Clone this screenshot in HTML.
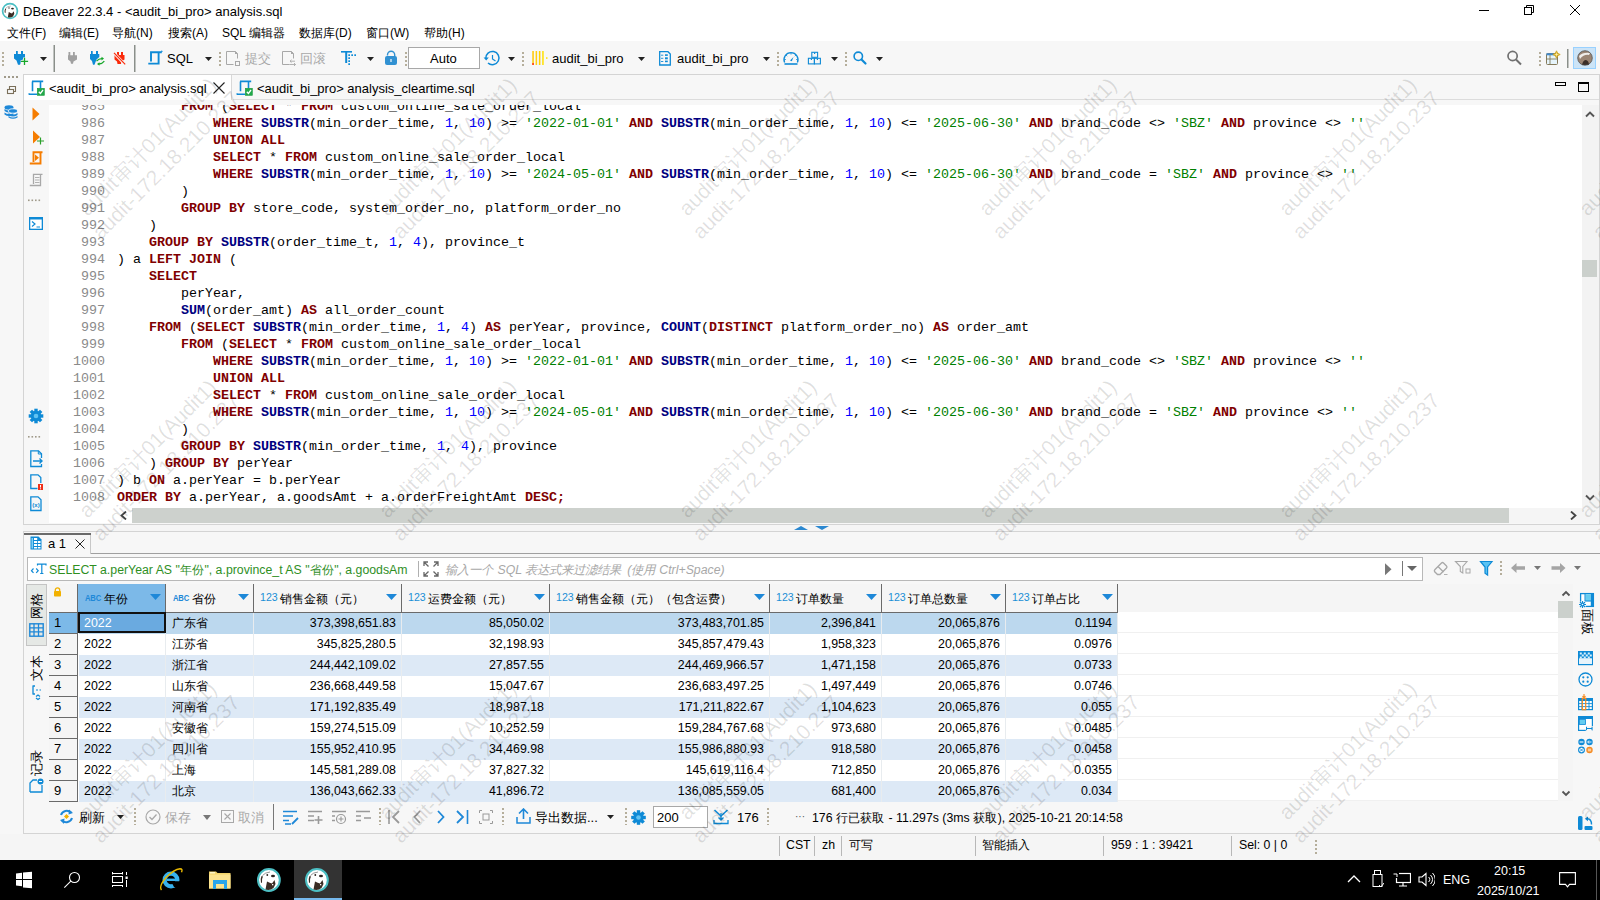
<!DOCTYPE html><html><head><meta charset="utf-8"><style>
*{margin:0;padding:0;box-sizing:border-box}
html,body{width:1600px;height:900px;overflow:hidden;background:#f7f7f7;font-family:"Liberation Sans",sans-serif}
.t{position:absolute;white-space:pre;line-height:16px}
.cj{display:inline-block;overflow:visible;white-space:pre;vertical-align:top}
.code{position:absolute;font-family:"Liberation Mono",monospace;font-size:13.33px;line-height:17px;white-space:pre;color:#000}
.k{color:#800000;font-weight:bold}
.f{color:#000080;font-weight:bold}
.n{color:#0000ff}
.s{color:#008000}
.ln{position:absolute;font-family:"Liberation Mono",monospace;font-size:13.33px;line-height:17px;white-space:pre;color:#8a8a8a;text-align:right;width:56px}
.wm{position:absolute;width:300px;height:52px;text-align:center;transform:rotate(-45deg);color:rgba(0,0,0,0.12);font-size:21px;line-height:26px;white-space:pre}
</style></head><body><div style="position:absolute;left:0px;top:0px;width:1600px;height:22px;background:#fff"></div>
<div style="position:absolute;left:0px;top:22px;width:1600px;height:19px;background:#fff"></div>
<svg style="position:absolute;left:1px;top:2px;" width="18" height="18" viewBox="0 0 18 18"><circle cx="9" cy="9" r="7.4" fill="#fff" stroke="#4cbfc4" stroke-width="1.7"/><circle cx="8" cy="6" r="0.7" fill="#2a2420"/><ellipse cx="11.5" cy="6.6" rx="1.4" ry="0.9" fill="#2a2420"/><path d="M4.2 6.5 Q3.2 8.5 3.9 11 L4.6 10.7 Q4.3 8.5 5.2 6.8 Z" fill="#3a2c24"/><path d="M5 6 Q6.5 4.3 9.8 4" stroke="#777" stroke-width="0.5" fill="none"/><path d="M6.8 15.3 L7.8 10 Q9.8 11.2 11 11.5 L12.7 9.2 L13.3 11.8 L12 14.5 Q9.8 16.2 6.8 15.3 Z" fill="#3a2c24"/></svg>
<div class="t" style="left:23px;top:4px;font-size:13px;color:#000;">DBeaver 22.3.4 - &lt;audit_bi_pro&gt; analysis.sql</div>
<div style="position:absolute;left:1479px;top:10px;width:10px;height:1px;background:#000"></div>
<svg style="position:absolute;left:1523px;top:4px;" width="12" height="12" viewBox="0 0 12 12"><rect x="1.5" y="3.5" width="7" height="7" fill="none" stroke="#000"/><path d="M3.5 3.5 V1.5 H10.5 V8.5 H8.5" fill="none" stroke="#000"/></svg>
<svg style="position:absolute;left:1569px;top:4px;" width="12" height="12" viewBox="0 0 12 12"><path d="M1 1 L11 11 M11 1 L1 11" stroke="#000" stroke-width="1"/></svg>
<div class="t" style="left:7px;top:25px;font-size:12px;color:#000;"><span class="cj" style="width:2em">文件</span>(F)</div>
<div class="t" style="left:59px;top:25px;font-size:12px;color:#000;"><span class="cj" style="width:2em">编辑</span>(E)</div>
<div class="t" style="left:112px;top:25px;font-size:12px;color:#000;"><span class="cj" style="width:2em">导航</span>(N)</div>
<div class="t" style="left:168px;top:25px;font-size:12px;color:#000;"><span class="cj" style="width:2em">搜索</span>(A)</div>
<div class="t" style="left:222px;top:25px;font-size:12px;color:#000;">SQL <span class="cj" style="width:3em">编辑器</span></div>
<div class="t" style="left:299px;top:25px;font-size:12px;color:#000;"><span class="cj" style="width:3em">数据库</span>(D)</div>
<div class="t" style="left:366px;top:25px;font-size:12px;color:#000;"><span class="cj" style="width:2em">窗口</span>(W)</div>
<div class="t" style="left:424px;top:25px;font-size:12px;color:#000;"><span class="cj" style="width:2em">帮助</span>(H)</div>
<div style="position:absolute;left:0px;top:41px;width:1600px;height:33px;background:#f7f7f7"></div>
<svg style="position:absolute;left:0;top:0" width="1600" height="74" viewBox="0 0 1600 74"><rect x="2" y="52" width="2" height="2" fill="#b5ae9b"/><rect x="2" y="56" width="2" height="2" fill="#b5ae9b"/><rect x="2" y="60" width="2" height="2" fill="#b5ae9b"/><rect x="2" y="64" width="2" height="2" fill="#b5ae9b"/><rect x="219" y="52" width="2" height="2" fill="#b5ae9b"/><rect x="219" y="56" width="2" height="2" fill="#b5ae9b"/><rect x="219" y="60" width="2" height="2" fill="#b5ae9b"/><rect x="219" y="64" width="2" height="2" fill="#b5ae9b"/><rect x="405" y="52" width="2" height="2" fill="#b5ae9b"/><rect x="405" y="56" width="2" height="2" fill="#b5ae9b"/><rect x="405" y="60" width="2" height="2" fill="#b5ae9b"/><rect x="405" y="64" width="2" height="2" fill="#b5ae9b"/><rect x="522" y="52" width="2" height="2" fill="#b5ae9b"/><rect x="522" y="56" width="2" height="2" fill="#b5ae9b"/><rect x="522" y="60" width="2" height="2" fill="#b5ae9b"/><rect x="522" y="64" width="2" height="2" fill="#b5ae9b"/><rect x="777" y="52" width="2" height="2" fill="#b5ae9b"/><rect x="777" y="56" width="2" height="2" fill="#b5ae9b"/><rect x="777" y="60" width="2" height="2" fill="#b5ae9b"/><rect x="777" y="64" width="2" height="2" fill="#b5ae9b"/><rect x="845" y="52" width="2" height="2" fill="#b5ae9b"/><rect x="845" y="56" width="2" height="2" fill="#b5ae9b"/><rect x="845" y="60" width="2" height="2" fill="#b5ae9b"/><rect x="845" y="64" width="2" height="2" fill="#b5ae9b"/><rect x="1539" y="52" width="2" height="2" fill="#b5ae9b"/><rect x="1539" y="56" width="2" height="2" fill="#b5ae9b"/><rect x="1539" y="60" width="2" height="2" fill="#b5ae9b"/><rect x="1539" y="64" width="2" height="2" fill="#b5ae9b"/><path d="M16 51 H17.8 V54 H21 V51 H23 V54 H25 V57.5 L21.5 60.5 L20 64.7 H18 L16.5 60.5 L14 58.5 V54 H16 Z" fill="#0e8ad6"/><path d="M24.5 57.6 V65.2 M20.7 61.4 H28.3" stroke="#f7f7f7" stroke-width="3"/><path d="M24.5 57.8 V65 M20.9 61.4 H28.1" stroke="#17a82b" stroke-width="1.3"/><path d="M40 57 H47 L43.5 61 Z" fill="#222"/><path d="M205 57 H212 L208.5 61 Z" fill="#222"/><path d="M367 57 H374 L370.5 61 Z" fill="#222"/><path d="M508 57 H515 L511.5 61 Z" fill="#222"/><path d="M638 57 H645 L641.5 61 Z" fill="#222"/><path d="M763 57 H770 L766.5 61 Z" fill="#222"/><path d="M831 57 H838 L834.5 61 Z" fill="#222"/><path d="M876 57 H883 L879.5 61 Z" fill="#222"/><rect x="53.5" y="45" width="1.5" height="27" fill="#8a8f8a"/><rect x="134" y="45" width="1.5" height="27" fill="#8a8f8a"/><path d="M68.5 52 H70.3 V55.3 H73 V52 H74.8 V55.3 H77 V59.5 L73.5 61.5 L73 63.7 H71 L70.5 61.5 L68 59.5 V55.3 H68.5 Z" fill="#a0a0a0"/><path d="M91 51 H92.7 V54 H96 V51 H98 V54 H99.3 V57 L96.5 59.5 L94.5 64.7 H93 L92 61 L90 59 V54 H91 Z" fill="#0e8ad6"/><path d="M96.5 61.2 Q99 58.3 102.5 58.6" stroke="#17a82b" stroke-width="1.3" fill="none"/><path d="M101.5 56.8 L104 58.6 L101.5 60.4 Z" fill="#17a82b"/><path d="M104.3 61.2 Q102 64.2 98.5 64" stroke="#17a82b" stroke-width="1.3" fill="none"/><path d="M99.5 62.2 L97 64 L99.5 65.8 Z" fill="#17a82b"/><path d="M117 52 H119 V55 H121 V52 H123 V55 H124.5 V59.5 L121.5 61.5 L121 64 H117.5 L117 61.5 L114.5 59.5 V55 H117 Z" fill="#fa2a0a"/><path d="M113.5 52.5 L125 64.5" stroke="#f7f7f7" stroke-width="2.6"/><path d="M114 52.8 L125.2 64.3" stroke="#fa2a0a" stroke-width="1.2"/><path d="M151 61.5 V52.3 H161.8 M158.6 52.8 V63.6 H148.3" stroke="#0e8ad6" stroke-width="1.9" fill="none"/><path d="M161 51 L162.5 51.5" stroke="#0e8ad6" stroke-width="1.2"/><path d="M233.5 64.5 H226.5 V51.5 H235.5 L237.5 53.5 V58.5" stroke="#a8a8a8" stroke-width="1" fill="none"/><path d="M235 51 L238 54 H235 Z" fill="#a8a8a8"/><rect x="235.5" y="61.5" width="4" height="4" fill="none" stroke="#a8a8a8" stroke-width="1"/><path d="M289.5 64.5 H282.5 V51.5 H291.5 L293.5 53.5 V58.5" stroke="#a8a8a8" stroke-width="1" fill="none"/><path d="M291 51 L294 54 H291 Z" fill="#a8a8a8"/><path d="M290 61.2 H295 M291.5 59.8 L290 61.2 L291.5 62.6 M289.5 64.5 H295.5 M294 63 L295.5 64.5 L294 66" stroke="#a8a8a8" stroke-width="0.9" fill="none"/><rect x="341" y="51" width="11" height="1.6" fill="#0e8ad6"/><rect x="345.2" y="52" width="2" height="11" fill="#0e8ad6"/><rect x="348.3" y="54.3" width="1.7" height="1.7" fill="#0e8ad6"/><rect x="351.3" y="54.3" width="1.7" height="1.7" fill="#0e8ad6"/><rect x="354.3" y="54.3" width="1.7" height="1.7" fill="#0e8ad6"/><rect x="348.3" y="57.3" width="1.7" height="1.7" fill="#0e8ad6"/><rect x="348.3" y="60.3" width="1.7" height="1.7" fill="#0e8ad6"/><rect x="348.3" y="63.3" width="1.7" height="1.7" fill="#0e8ad6"/><path d="M387.5 55.5 V54.8 A3.6 3.6 0 0 1 394.7 54.8 V56.5" stroke="#3191d2" stroke-width="1.4" fill="none"/><rect x="385" y="56" width="12" height="9" rx="2" fill="#3191d2"/><rect x="390.3" y="59" width="1.4" height="3" fill="#d8ecf8"/><path d="M485.8 58.5 A6.6 6.6 0 1 1 488 63" stroke="#0e8ad6" stroke-width="1.5" fill="none"/><path d="M483.6 57.5 H488.8 L486.2 60.6 Z" fill="#0e8ad6"/><path d="M492.5 55 V59 L495.5 61" stroke="#0e8ad6" stroke-width="1.2" fill="none"/><rect x="532.3" y="51" width="1.5" height="14" fill="#ffc800"/><rect x="535.6" y="51" width="1.5" height="14" fill="#ffcf10"/><rect x="538.9" y="51" width="1.5" height="14" fill="#ffd000"/><rect x="542.2" y="51" width="1.5" height="14" fill="#ffe000"/><rect x="532.3" y="63" width="1.5" height="2" fill="#ff3020"/><rect x="546" y="57.3" width="1.5" height="1.5" fill="#ffe000"/><path d="M659.7 51.7 H668 L670.3 54 V65 H659.7 Z" stroke="#0e8ad6" stroke-width="1.3" fill="none"/><path d="M661 55.2 H663.3 M661 58.3 H663.3 M661 61.5 H663.3" stroke="#0e8ad6" stroke-width="0.9"/><rect x="665" y="54.3" width="2.8" height="1.6" fill="#0e8ad6"/><rect x="665" y="57.3" width="2.8" height="2" fill="#0e8ad6"/><rect x="665" y="60.6" width="2.8" height="1.6" fill="#0e8ad6"/><path d="M784.6 62.5 A7 7 0 1 1 797.4 62.5" stroke="#0e8ad6" stroke-width="1.3" fill="none"/><path d="M784.5 64 H797.5" stroke="#0e8ad6" stroke-width="1.6"/><path d="M791 53 V54.5 M786.2 55.2 L787.2 56.2 M795.8 55.2 L794.8 56.2 M784.3 59.5 H785.8 M797.7 59.5 H796.2" stroke="#0e8ad6" stroke-width="0.9"/><path d="M790 60.5 L793.5 57 L791.8 61.2 Z" fill="#0e8ad6"/><rect x="811.8" y="52.3" width="5.8" height="5" fill="none" stroke="#0e8ad6" stroke-width="1.1"/><rect x="808.4" y="58.3" width="6" height="5.6" fill="none" stroke="#0e8ad6" stroke-width="1.1"/><rect x="814.4" y="58.3" width="6" height="5.6" fill="none" stroke="#0e8ad6" stroke-width="1.1"/><rect x="814" y="52.5" width="1.2" height="1.5" fill="#0e8ad6"/><rect x="810.8" y="58.5" width="1.2" height="1.5" fill="#0e8ad6"/><rect x="816.8" y="58.5" width="1.2" height="1.5" fill="#0e8ad6"/><circle cx="858.3" cy="56.3" r="4.2" stroke="#0e8ad6" stroke-width="1.6" fill="none"/><path d="M861.5 59.5 L865.5 63.5" stroke="#0e8ad6" stroke-width="2.2" stroke-linecap="round"/><circle cx="1512.6" cy="56" r="4.6" stroke="#707070" stroke-width="1.7" fill="none"/><path d="M1516 59.5 L1521 64.5" stroke="#707070" stroke-width="2"/><rect x="1546.5" y="53.5" width="11" height="11" rx="1" fill="#e6f4fb" stroke="#857a5a" stroke-width="1"/><rect x="1546.5" y="53.3" width="8" height="2" fill="#3f8ad0"/><path d="M1550 55 V64.5 M1546.5 59 H1557.5" stroke="#857a5a" stroke-width="0.9"/><path d="M1556.5 50.8 L1558.2 54.5 L1556.5 58.2 L1554.8 54.5 Z M1552.8 54.5 L1556.5 52.8 L1560.2 54.5 L1556.5 56.2 Z" fill="#fff2a8" stroke="#c89a10" stroke-width="0.8"/><rect x="1567" y="49" width="1.5" height="19" fill="#8a8f8a"/></svg>
<div class="t" style="left:167px;top:51px;font-size:13px;color:#000;">SQL</div>
<div class="t" style="left:245px;top:51px;font-size:13px;color:#a8a8a8;"><span class="cj" style="width:2em">提交</span></div>
<div class="t" style="left:300px;top:51px;font-size:13px;color:#a8a8a8;"><span class="cj" style="width:2em">回滚</span></div>
<div style="position:absolute;left:408px;top:47px;width:72px;height:22px;background:#fff;border:1px solid #a8a8a8"></div>
<div class="t" style="left:430px;top:51px;font-size:13px;color:#000;">Auto</div>
<div class="t" style="left:552px;top:51px;font-size:13px;color:#000;">audit_bi_pro</div>
<div class="t" style="left:677px;top:51px;font-size:13px;color:#000;">audit_bi_pro</div>
<div style="position:absolute;left:1573px;top:47px;width:23px;height:22px;background:#cce4f7;border:1px solid #99d1ff"></div>
<svg style="position:absolute;left:1577px;top:50px;" width="16" height="16" viewBox="0 0 16 16"><circle cx="8" cy="8" r="7.3" fill="#9b8574"/><path d="M2 6 Q6 2 13 3 L12 5 Q7 4 3 9 Z" fill="#fff" opacity="0.85"/><path d="M5 15 Q6 10 9 10 Q12 11 12 15 Z" fill="#3a2e28"/><circle cx="8" cy="8" r="7.3" fill="none" stroke="#555" stroke-width="0.8"/></svg>
<div style="position:absolute;left:0px;top:74px;width:23px;height:786px;background:#f7f7f7"></div>
<div style="position:absolute;left:4px;top:76px;width:14px;height:2px;background:repeating-linear-gradient(90deg,#a09a8a 0 2px,transparent 2px 4px)"></div>
<svg style="position:absolute;left:6px;top:85px;" width="11" height="11" viewBox="0 0 11 11"><rect x="1.5" y="4.5" width="6" height="4" fill="none" stroke="#7a6f5a" stroke-width="1.1"/><path d="M3.5 4.5 V1.5 H9.5 V6.5 H7.5" fill="none" stroke="#7a6f5a" stroke-width="1.1"/></svg>
<svg style="position:absolute;left:4px;top:105px;" width="14" height="14" viewBox="0 0 14 14"><ellipse cx="5" cy="2.5" rx="4.5" ry="2.2" fill="#1e88d8"/><path d="M0.5 4 Q5 7 9.5 4 V6 Q5 9 0.5 6 Z M0.5 7.5 Q5 10.5 9.5 7.5 V9.5 Q5 12.5 0.5 9.5 Z" fill="#1e88d8"/><ellipse cx="9" cy="6" rx="4.5" ry="2.2" fill="#1e88d8" stroke="#fff" stroke-width="0.8"/><path d="M4.5 8 Q9 11 13.5 8 V10 Q9 13 4.5 10 Z M4.5 11 Q9 14 13.5 11 V12.5 Q9 15 4.5 12.5 Z" fill="#1e88d8"/></svg>
<div style="position:absolute;left:23px;top:74px;width:1577px;height:451px;background:#f7f7f7;border:1px solid #d4d4d4"></div>
<div style="position:absolute;left:24px;top:75px;width:208px;height:25px;background:#fff;border-right:1px solid #d8d8d8"></div>
<div style="position:absolute;left:233px;top:99px;width:1366px;height:1px;background:#dcdcdc"></div>
<svg style="position:absolute;left:28px;top:79px;" width="18" height="18" viewBox="0 0 18 18"><path d="M4 2.4 H15.2 M4.5 2.4 V12.2 M12.5 2.8 V9.5 M1 15.2 H9" stroke="#0e8ad6" stroke-width="1.6" fill="none"/><path d="M1 14.2 V15.8" stroke="#0e8ad6" stroke-width="1"/><rect x="9.3" y="9.3" width="7" height="7" fill="#22a84a" stroke="#179a3c" stroke-width="0.6"/><path d="M10.8 12.8 L12.4 14.5 L15 11" stroke="#fff" stroke-width="1.3" fill="none"/></svg>
<div class="t" style="left:49px;top:81px;font-size:13px;color:#000;">&lt;audit_bi_pro&gt; analysis.sql</div>
<svg style="position:absolute;left:213px;top:82px;" width="12" height="12" viewBox="0 0 12 12"><path d="M0.5 0.5 L11.5 11.5 M11.5 0.5 L0.5 11.5" stroke="#222" stroke-width="1.1"/></svg>
<svg style="position:absolute;left:236px;top:79px;" width="18" height="18" viewBox="0 0 18 18"><path d="M4 2.4 H15.2 M4.5 2.4 V12.2 M12.5 2.8 V9.5 M1 15.2 H9" stroke="#0e8ad6" stroke-width="1.6" fill="none"/><path d="M1 14.2 V15.8" stroke="#0e8ad6" stroke-width="1"/><rect x="9.3" y="9.3" width="7" height="7" fill="#22a84a" stroke="#179a3c" stroke-width="0.6"/><path d="M10.8 12.8 L12.4 14.5 L15 11" stroke="#fff" stroke-width="1.3" fill="none"/></svg>
<div class="t" style="left:257px;top:81px;font-size:13px;color:#000;">&lt;audit_bi_pro&gt; analysis_cleartime.sql</div>
<div style="position:absolute;left:1555px;top:82px;width:11px;height:4px;border:1px solid #000"></div>
<div style="position:absolute;left:1578px;top:82px;width:11px;height:10px;border:1px solid #000;border-top-width:2px"></div>
<svg style="position:absolute;left:0;top:0" width="60" height="520" viewBox="0 0 60 520"><path d="M32.5 107.5 L39.5 114 L32.5 120.5 Z" fill="#f57c00"/><path d="M33 130.5 L40 137 L33 143.5 Z" fill="#f57c00"/><path d="M40.5 137.5 V144.5 M37 141 H44" stroke="#2aa02a" stroke-width="1.2"/><path d="M33.5 162 V152.3 H42.5 M40.5 152.8 V163.5 H29.8" stroke="#f57c00" stroke-width="1.9" fill="none"/><path d="M35 154.5 L39 157.8 L35 161 Z" fill="#f57c00"/><path d="M33.5 184 V174.3 H42.5 M40.5 174.8 V185.5 H29.8" stroke="#a8a8a8" stroke-width="1.3" fill="none"/><path d="M35 177.5 H39.5 M35 180 H39.5 M35 182.5 H39.5" stroke="#a8a8a8" stroke-width="0.9"/><rect x="28" y="199.5" width="1.6" height="1.6" fill="#a09a8a"/><rect x="28" y="436" width="1.6" height="1.6" fill="#a09a8a"/><rect x="31.5" y="199.5" width="1.6" height="1.6" fill="#a09a8a"/><rect x="31.5" y="436" width="1.6" height="1.6" fill="#a09a8a"/><rect x="35" y="199.5" width="1.6" height="1.6" fill="#a09a8a"/><rect x="35" y="436" width="1.6" height="1.6" fill="#a09a8a"/><rect x="38.5" y="199.5" width="1.6" height="1.6" fill="#a09a8a"/><rect x="38.5" y="436" width="1.6" height="1.6" fill="#a09a8a"/><rect x="29" y="217" width="14" height="13" fill="#0e8ad6"/><rect x="30.3" y="219.5" width="11.4" height="9.2" fill="#fff"/><path d="M32 221.5 L35 224 L32 226.5 M36.5 227 H40" stroke="#0e8ad6" stroke-width="1.2" fill="none"/><rect x="34.3" y="408.7" width="3.4" height="3.5" fill="#0e8ad6" transform="rotate(0 36 416)"/><rect x="34.3" y="408.7" width="3.4" height="3.5" fill="#0e8ad6" transform="rotate(45 36 416)"/><rect x="34.3" y="408.7" width="3.4" height="3.5" fill="#0e8ad6" transform="rotate(90 36 416)"/><rect x="34.3" y="408.7" width="3.4" height="3.5" fill="#0e8ad6" transform="rotate(135 36 416)"/><rect x="34.3" y="408.7" width="3.4" height="3.5" fill="#0e8ad6" transform="rotate(180 36 416)"/><rect x="34.3" y="408.7" width="3.4" height="3.5" fill="#0e8ad6" transform="rotate(225 36 416)"/><rect x="34.3" y="408.7" width="3.4" height="3.5" fill="#0e8ad6" transform="rotate(270 36 416)"/><rect x="34.3" y="408.7" width="3.4" height="3.5" fill="#0e8ad6" transform="rotate(315 36 416)"/><circle cx="36" cy="416" r="5.2" fill="#0e8ad6"/><circle cx="36" cy="416" r="2.3" fill="#62c3f2"/><path d="M41.5 464 V466.5 H30.8 V450.8 H38.5 L41.5 453.8 V458" stroke="#0e8ad6" stroke-width="1.3" fill="none"/><path d="M38.3 450.8 V454 H41.5" stroke="#0e8ad6" stroke-width="1" fill="none"/><path d="M33 461 H42 M39.5 458.5 L42 461 L39.5 463.5" stroke="#0e8ad6" stroke-width="1.4" fill="none"/><path d="M37.5 488.5 H30.8 V474.8 H38 L40.8 477.6 V483" stroke="#0e8ad6" stroke-width="1.3" fill="none"/><rect x="38" y="484" width="5" height="6" fill="#f0301a"/><path d="M40.5 485 V487.5 M40.5 488.3 V489.3" stroke="#fff" stroke-width="1"/><path d="M30.8 510.5 V496.8 H38 L41 499.8 V510.5 Z" stroke="#0e8ad6" stroke-width="1.3" fill="none"/><text x="36" y="507" font-size="6" fill="#0e8ad6" text-anchor="middle" font-family="Liberation Sans" font-weight="bold">(x)</text></svg>
<div style="position:absolute;left:49px;top:105px;width:1533px;height:403px;background:#fff"></div>
<div style="position:absolute;left:49px;top:508px;width:1533px;height:15px;background:#fff"></div>
<div style="position:absolute;left:1509px;top:508px;width:73px;height:15px;background:#f5f5f5"></div>
<div style="position:absolute;left:132px;top:508px;width:1377px;height:15px;background:#cdd1cd"></div>
<svg style="position:absolute;left:120px;top:511px;" width="7" height="9" viewBox="0 0 7 9"><path d="M6 0.5 L1.5 4.5 L6 8.5" stroke="#444" stroke-width="1.8" fill="none"/></svg>
<svg style="position:absolute;left:1570px;top:511px;" width="7" height="9" viewBox="0 0 7 9"><path d="M1 0.5 L5.5 4.5 L1 8.5" stroke="#444" stroke-width="1.8" fill="none"/></svg>
<div style="position:absolute;left:1582px;top:105px;width:17px;height:403px;background:#f3f3f3"></div>
<div style="position:absolute;left:1582px;top:508px;width:17px;height:15px;background:#f5f5f5"></div>
<div style="position:absolute;left:1582px;top:260px;width:15px;height:17px;background:#cbd0cc"></div>
<svg style="position:absolute;left:1585px;top:110px;" width="10" height="8" viewBox="0 0 10 8"><path d="M1 6.5 L5 2.5 L9 6.5" stroke="#555" stroke-width="1.9" fill="none"/></svg>
<svg style="position:absolute;left:1585px;top:494px;" width="10" height="8" viewBox="0 0 10 8"><path d="M1 1.5 L5 5.5 L9 1.5" stroke="#555" stroke-width="1.9" fill="none"/></svg>
<div style="position:absolute;left:49px;top:105px;width:1533px;height:403px;overflow:hidden"><div class="ln" style="left:0px;top:-7px">985
986
987
988
989
990
991
992
993
994
995
996
997
998
999
1000
1001
1002
1003
1004
1005
1006
1007
1008</div><div class="code" style="left:68px;top:-7px">        <span class="k">FROM</span> (<span class="k">SELECT</span> * <span class="k">FROM</span> custom_online_sale_order_local
            <span class="k">WHERE</span> <span class="f">SUBSTR</span>(min_order_time, <span class="n">1</span>, <span class="n">10</span>) &gt;= <span class="s">&#x27;2022-01-01&#x27;</span> <span class="k">AND</span> <span class="f">SUBSTR</span>(min_order_time, <span class="n">1</span>, <span class="n">10</span>) &lt;= <span class="s">&#x27;2025-06-30&#x27;</span> <span class="k">AND</span> brand_code &lt;&gt; <span class="s">&#x27;SBZ&#x27;</span> <span class="k">AND</span> province &lt;&gt; <span class="s">&#x27;&#x27;</span>
            <span class="k">UNION</span> <span class="k">ALL</span>
            <span class="k">SELECT</span> * <span class="k">FROM</span> custom_online_sale_order_local
            <span class="k">WHERE</span> <span class="f">SUBSTR</span>(min_order_time, <span class="n">1</span>, <span class="n">10</span>) &gt;= <span class="s">&#x27;2024-05-01&#x27;</span> <span class="k">AND</span> <span class="f">SUBSTR</span>(min_order_time, <span class="n">1</span>, <span class="n">10</span>) &lt;= <span class="s">&#x27;2025-06-30&#x27;</span> <span class="k">AND</span> brand_code = <span class="s">&#x27;SBZ&#x27;</span> <span class="k">AND</span> province &lt;&gt; <span class="s">&#x27;&#x27;</span>
        )
        <span class="k">GROUP</span> <span class="k">BY</span> store_code, system_order_no, platform_order_no
    )
    <span class="k">GROUP</span> <span class="k">BY</span> <span class="f">SUBSTR</span>(order_time_t, <span class="n">1</span>, <span class="n">4</span>), province_t
) a <span class="k">LEFT</span> <span class="k">JOIN</span> (
    <span class="k">SELECT</span>
        perYear,
        <span class="f">SUM</span>(order_amt) <span class="k">AS</span> all_order_count
    <span class="k">FROM</span> (<span class="k">SELECT</span> <span class="f">SUBSTR</span>(min_order_time, <span class="n">1</span>, <span class="n">4</span>) <span class="k">AS</span> perYear, province, <span class="f">COUNT</span>(<span class="k">DISTINCT</span> platform_order_no) <span class="k">AS</span> order_amt
        <span class="k">FROM</span> (<span class="k">SELECT</span> * <span class="k">FROM</span> custom_online_sale_order_local
            <span class="k">WHERE</span> <span class="f">SUBSTR</span>(min_order_time, <span class="n">1</span>, <span class="n">10</span>) &gt;= <span class="s">&#x27;2022-01-01&#x27;</span> <span class="k">AND</span> <span class="f">SUBSTR</span>(min_order_time, <span class="n">1</span>, <span class="n">10</span>) &lt;= <span class="s">&#x27;2025-06-30&#x27;</span> <span class="k">AND</span> brand_code &lt;&gt; <span class="s">&#x27;SBZ&#x27;</span> <span class="k">AND</span> province &lt;&gt; <span class="s">&#x27;&#x27;</span>
            <span class="k">UNION</span> <span class="k">ALL</span>
            <span class="k">SELECT</span> * <span class="k">FROM</span> custom_online_sale_order_local
            <span class="k">WHERE</span> <span class="f">SUBSTR</span>(min_order_time, <span class="n">1</span>, <span class="n">10</span>) &gt;= <span class="s">&#x27;2024-05-01&#x27;</span> <span class="k">AND</span> <span class="f">SUBSTR</span>(min_order_time, <span class="n">1</span>, <span class="n">10</span>) &lt;= <span class="s">&#x27;2025-06-30&#x27;</span> <span class="k">AND</span> brand_code = <span class="s">&#x27;SBZ&#x27;</span> <span class="k">AND</span> province &lt;&gt; <span class="s">&#x27;&#x27;</span>
        )
        <span class="k">GROUP</span> <span class="k">BY</span> <span class="f">SUBSTR</span>(min_order_time, <span class="n">1</span>, <span class="n">4</span>), province
    ) <span class="k">GROUP</span> <span class="k">BY</span> perYear
) b <span class="k">ON</span> a.perYear = b.perYear
<span class="k">ORDER</span> <span class="k">BY</span> a.perYear, a.goodsAmt + a.orderFreightAmt <span class="k">DESC</span><span class="k">;</span></div></div>
<div style="position:absolute;left:23px;top:525px;width:1577px;height:7px;background:#f5f5f5;border-bottom:1px solid #d4d4d4"></div>
<svg style="position:absolute;left:794px;top:526px;" width="14" height="4" viewBox="0 0 14 4"><path d="M0 4 L7 0 L14 4 Z" fill="#2b88d0"/></svg>
<svg style="position:absolute;left:815px;top:526px;" width="14" height="4" viewBox="0 0 14 4"><path d="M0 0 L14 0 L7 4 Z" fill="#2b88d0"/></svg>
<div style="position:absolute;left:23px;top:532px;width:1577px;height:302px;background:#f7f7f7;border-left:1px solid #d4d4d4;border-bottom:1px solid #d4d4d4"></div>
<div style="position:absolute;left:24px;top:553px;width:1576px;height:1px;background:#a0a0a0"></div>
<div style="position:absolute;left:24px;top:533px;width:67px;height:2px;background:#6a6a6a"></div>
<div style="position:absolute;left:24px;top:535px;width:67px;height:19px;background:#f7f7f7;border-right:1px solid #c8c8c8"></div>
<svg style="position:absolute;left:30px;top:536px;" width="12" height="14" viewBox="0 0 12 14"><path d="M0.5 0.5 H8.5 L11.5 3.5 V13.5 H0.5 Z" fill="#0e8ad6"/><rect x="4" y="2" width="3.2" height="2" fill="#fff"/><rect x="4" y="5" width="3.2" height="2" fill="#fff"/><rect x="4" y="8" width="3.2" height="2" fill="#fff"/><rect x="4" y="11" width="3.2" height="1.5" fill="#fff"/><rect x="8" y="5" width="2.5" height="2" fill="#fff"/><rect x="8" y="8" width="2.5" height="2" fill="#fff"/><rect x="8" y="11" width="2.5" height="1.5" fill="#fff"/><rect x="1.5" y="2" width="1.6" height="10.5" fill="#7fd0f5"/></svg>
<div class="t" style="left:48px;top:536px;font-size:13px;color:#000;">a 1</div>
<svg style="position:absolute;left:75px;top:539px;" width="10" height="10" viewBox="0 0 10 10"><path d="M0.5 0.5 L9.5 9.5 M9.5 0.5 L0.5 9.5" stroke="#222" stroke-width="1"/></svg>
<div style="position:absolute;left:27px;top:557px;width:1396px;height:24px;background:#fff;border:1px solid #b8b8b8"></div>
<svg style="position:absolute;left:30px;top:562px;" width="18" height="14" viewBox="0 0 18 14"><path d="M3.5 6.5 L1.5 8.7 L3.5 10.9 M6.2 6.5 L8.2 8.7 L6.2 10.9" stroke="#0e8ad6" stroke-width="1.2" fill="none"/><path d="M7.5 3.5 V2.2 H16 V3.5 M11.8 2.2 V11.5 M10.2 11.5 H13.4" stroke="#0e8ad6" stroke-width="1.2" fill="none"/></svg>
<div class="t" style="left:49px;top:562px;font-size:12.3px;color:#2f8f1f;">SELECT a.perYear AS "<span class="cj" style="width:2em">年份</span>", a.province_t AS "<span class="cj" style="width:2em">省份</span>", a.goodsAm</div>
<div style="position:absolute;left:418px;top:561px;width:1px;height:16px;background:#b0b0b0"></div>
<svg style="position:absolute;left:423px;top:561px;" width="16" height="16" viewBox="0 0 16 16"><path d="M1 5 V1 H5 M11 1 H15 V5 M15 11 V15 H11 M5 15 H1 V11 M1.5 1.5 L5.5 5.5 M14.5 1.5 L10.5 5.5 M14.5 14.5 L10.5 10.5 M1.5 14.5 L5.5 10.5" stroke="#666" stroke-width="1.3" fill="none"/></svg>
<div class="t" style="left:445px;top:562px;font-size:12.3px;color:#a8a8a8;font-style:italic"><span class="cj" style="width:4em">输入一个</span> SQL <span class="cj" style="width:8em">表达式来过滤结果</span> (<span class="cj" style="width:2em">使用</span> Ctrl+Space)</div>
<svg style="position:absolute;left:0;top:0" width="1600" height="590" viewBox="0 0 1600 590"><path d="M1385 563.3 L1391.5 569.2 L1385 575.2 Z" fill="#777"/><rect x="1402" y="561" width="1" height="15" fill="#777"/><path d="M1407 566 H1417 L1412 571 Z" fill="#666"/><path d="M1435 569.5 L1441.5 563 Q1442.5 562 1443.5 563 L1446.5 566 Q1447.5 567 1446.5 568 L1440 574.5 H1437.5 L1434.5 571.5 Q1434 570.5 1435 569.5 Z" fill="none" stroke="#a8a8a8" stroke-width="1.3"/><path d="M1438 566.5 L1443.5 572" stroke="#a8a8a8" stroke-width="1.2"/><path d="M1444 574.5 H1447.5" stroke="#a8a8a8" stroke-width="0.9"/><path d="M1455.5 561.5 H1467 L1462.8 566.5 V573 L1460.3 571.5 V566.5 Z" fill="none" stroke="#a8a8a8" stroke-width="1.1"/><rect x="1466" y="569" width="4" height="4" fill="#f7f7f7" stroke="#a8a8a8" stroke-width="1"/><path d="M1480.5 561.5 H1492 L1487.6 567 V575 L1485 573.2 V567 Z" fill="#5ac3f3" stroke="#0e8ad6" stroke-width="1.2"/><path d="M1511 568 L1516.5 563 V566.3 H1525 V569.7 H1516.5 V573 Z" fill="#a5a5a5"/><path d="M1565.5 568 L1560 563 V566.3 H1551.5 V569.7 H1560 V573 Z" fill="#a5a5a5"/><path d="M1534 566 H1541 L1537.5 570 Z" fill="#777"/><path d="M1574 566 H1581 L1577.5 570 Z" fill="#777"/><rect x="1500" y="561" width="2" height="2" fill="#b5ae9b"/><rect x="1500" y="565" width="2" height="2" fill="#b5ae9b"/><rect x="1500" y="569" width="2" height="2" fill="#b5ae9b"/><rect x="1500" y="573" width="2" height="2" fill="#b5ae9b"/></svg>
<div style="position:absolute;left:26px;top:584px;width:21px;height:62px;background:#e5e8e5;border:1px solid #c4c4c4"></div>
<div class="t" style="left:36px;top:606px;font-size:12.5px;color:#000;transform:translate(-50%,-50%) rotate(-90deg);left:37px"><span class="cj" style="width:2em">网格</span></div>
<svg style="position:absolute;left:29px;top:623px;" width="15" height="14" viewBox="0 0 15 14"><rect x="0.8" y="0.8" width="13.4" height="12.4" fill="none" stroke="#1e88d8" stroke-width="1.4"/><path d="M0.8 4.8 H14 M0.8 8.8 H14 M5 0.8 V13 M9.5 0.8 V13" stroke="#1e88d8" stroke-width="1.3"/></svg>
<div class="t" style="top:668px;font-size:12.5px;color:#000;transform:translate(-50%,-50%) rotate(-90deg);left:37px"><span class="cj" style="width:2em">文本</span></div>
<svg style="position:absolute;left:30px;top:685px;" width="14" height="16" viewBox="0 0 14 16"><path d="M3 1 V9 M2.5 1 H5 M2.5 9 H5" stroke="#0e8ad6" stroke-width="1.3" fill="none"/><path d="M6 5 H8 M9.5 5 H11" stroke="#0e8ad6" stroke-width="1.2"/><path d="M6 11.5 L8 10 L10 11.5 M6 13 L8 14.5 L10 13" stroke="#0e8ad6" stroke-width="1.2" fill="none"/></svg>
<div class="t" style="top:763px;font-size:12.5px;color:#000;transform:translate(-50%,-50%) rotate(-90deg);left:37px"><span class="cj" style="width:2em">记录</span></div>
<svg style="position:absolute;left:29px;top:778px;" width="15" height="15" viewBox="0 0 15 15"><path d="M1 14 V5 L4 2 H8 M13 7 V14 H1" stroke="#0e8ad6" stroke-width="1.3" fill="none"/><circle cx="11.5" cy="3.5" r="3" fill="#0e8ad6"/><path d="M10 3.5 H13" stroke="#fff" stroke-width="1"/></svg>
<div style="position:absolute;left:49px;top:584px;width:1509px;height:217px;background:#fff"></div>
<div style="position:absolute;left:49px;top:584px;width:1509px;height:28px;background:#f5f5f5"></div>
<div style="position:absolute;left:78px;top:584px;width:88px;height:28px;background:#7cb9e8"></div>
<svg style="position:absolute;left:54px;top:587px;" width="7" height="10" viewBox="0 0 7 10"><path d="M1.3 4.5 V3 A2.2 2.2 0 0 1 5.7 3 V4.5" stroke="#f2b100" stroke-width="1.3" fill="none"/><rect x="0" y="4" width="7" height="5.5" rx="0.8" fill="#f2b100"/></svg>
<div style="position:absolute;left:165px;top:584px;width:1px;height:28px;background:#6a6a6a"></div>
<div class="t" style="left:85px;top:590px;font-size:9px;color:#1e88d8;font-weight:bold;letter-spacing:-0.2px;transform:scaleX(0.85);transform-origin:0 0">ABC</div>
<div class="t" style="left:104px;top:591px;font-size:12px;color:#000;"><span class="cj" style="width:2em">年份</span></div>
<svg style="position:absolute;left:150px;top:594px;" width="11" height="6" viewBox="0 0 11 6"><path d="M0 0 H11 L5.5 6 Z" fill="#1e88d8"/></svg>
<div style="position:absolute;left:253px;top:584px;width:1px;height:28px;background:#6a6a6a"></div>
<div class="t" style="left:173px;top:590px;font-size:9px;color:#1e88d8;font-weight:bold;letter-spacing:-0.2px;transform:scaleX(0.85);transform-origin:0 0">ABC</div>
<div class="t" style="left:192px;top:591px;font-size:12px;color:#000;"><span class="cj" style="width:2em">省份</span></div>
<svg style="position:absolute;left:238px;top:594px;" width="11" height="6" viewBox="0 0 11 6"><path d="M0 0 H11 L5.5 6 Z" fill="#1e88d8"/></svg>
<div style="position:absolute;left:401px;top:584px;width:1px;height:28px;background:#6a6a6a"></div>
<div class="t" style="left:260px;top:589px;font-size:10.6px;color:#1a8fd6;">123</div>
<div class="t" style="left:280px;top:591px;font-size:12px;color:#000;"><span class="cj" style="width:7em">销售金额（元）</span></div>
<svg style="position:absolute;left:386px;top:594px;" width="11" height="6" viewBox="0 0 11 6"><path d="M0 0 H11 L5.5 6 Z" fill="#1e88d8"/></svg>
<div style="position:absolute;left:549px;top:584px;width:1px;height:28px;background:#6a6a6a"></div>
<div class="t" style="left:408px;top:589px;font-size:10.6px;color:#1a8fd6;">123</div>
<div class="t" style="left:428px;top:591px;font-size:12px;color:#000;"><span class="cj" style="width:7em">运费金额（元）</span></div>
<svg style="position:absolute;left:534px;top:594px;" width="11" height="6" viewBox="0 0 11 6"><path d="M0 0 H11 L5.5 6 Z" fill="#1e88d8"/></svg>
<div style="position:absolute;left:769px;top:584px;width:1px;height:28px;background:#6a6a6a"></div>
<div class="t" style="left:556px;top:589px;font-size:10.6px;color:#1a8fd6;">123</div>
<div class="t" style="left:576px;top:591px;font-size:12px;color:#000;"><span class="cj" style="width:13em">销售金额（元）（包含运费）</span></div>
<svg style="position:absolute;left:754px;top:594px;" width="11" height="6" viewBox="0 0 11 6"><path d="M0 0 H11 L5.5 6 Z" fill="#1e88d8"/></svg>
<div style="position:absolute;left:881px;top:584px;width:1px;height:28px;background:#6a6a6a"></div>
<div class="t" style="left:776px;top:589px;font-size:10.6px;color:#1a8fd6;">123</div>
<div class="t" style="left:796px;top:591px;font-size:12px;color:#000;"><span class="cj" style="width:4em">订单数量</span></div>
<svg style="position:absolute;left:866px;top:594px;" width="11" height="6" viewBox="0 0 11 6"><path d="M0 0 H11 L5.5 6 Z" fill="#1e88d8"/></svg>
<div style="position:absolute;left:1005px;top:584px;width:1px;height:28px;background:#6a6a6a"></div>
<div class="t" style="left:888px;top:589px;font-size:10.6px;color:#1a8fd6;">123</div>
<div class="t" style="left:908px;top:591px;font-size:12px;color:#000;"><span class="cj" style="width:5em">订单总数量</span></div>
<svg style="position:absolute;left:990px;top:594px;" width="11" height="6" viewBox="0 0 11 6"><path d="M0 0 H11 L5.5 6 Z" fill="#1e88d8"/></svg>
<div style="position:absolute;left:1117px;top:584px;width:1px;height:28px;background:#6a6a6a"></div>
<div class="t" style="left:1012px;top:589px;font-size:10.6px;color:#1a8fd6;">123</div>
<div class="t" style="left:1032px;top:591px;font-size:12px;color:#000;"><span class="cj" style="width:4em">订单占比</span></div>
<svg style="position:absolute;left:1102px;top:594px;" width="11" height="6" viewBox="0 0 11 6"><path d="M0 0 H11 L5.5 6 Z" fill="#1e88d8"/></svg>
<div style="position:absolute;left:49px;top:612px;width:1069px;height:1px;background:#6a6a6a"></div>
<div style="position:absolute;left:77px;top:584px;width:1px;height:28px;background:#6a6a6a"></div>
<div style="position:absolute;left:79px;top:613px;width:1039px;height:21px;background:#bcd8ee"></div>
<div style="position:absolute;left:1118px;top:632px;width:440px;height:1px;background:#f0f0f0"></div>
<div style="position:absolute;left:49px;top:613px;width:29px;height:21px;background:#7cb9e8;border-bottom:1px solid #6a6a6a"></div>
<div style="position:absolute;left:77px;top:612px;width:1px;height:22px;background:#6a6a6a"></div>
<div class="t" style="left:54px;top:615px;font-size:13px;color:#000;">1</div>
<div style="position:absolute;left:165px;top:613px;width:1px;height:21px;background:#e8ecef"></div>
<div class="t" style="left:84px;top:615px;font-size:12.4px;color:#000;">2022</div>
<div style="position:absolute;left:253px;top:613px;width:1px;height:21px;background:#e8ecef"></div>
<div class="t" style="left:172px;top:615px;font-size:12.4px;color:#000;"><span class="cj" style="width:3em">广东省</span></div>
<div style="position:absolute;left:401px;top:613px;width:1px;height:21px;background:#e8ecef"></div>
<div class="t" style="left:254px;top:615px;width:142px;text-align:right;font-size:12.4px;color:#000">373,398,651.83</div>
<div style="position:absolute;left:549px;top:613px;width:1px;height:21px;background:#e8ecef"></div>
<div class="t" style="left:402px;top:615px;width:142px;text-align:right;font-size:12.4px;color:#000">85,050.02</div>
<div style="position:absolute;left:769px;top:613px;width:1px;height:21px;background:#e8ecef"></div>
<div class="t" style="left:550px;top:615px;width:214px;text-align:right;font-size:12.4px;color:#000">373,483,701.85</div>
<div style="position:absolute;left:881px;top:613px;width:1px;height:21px;background:#e8ecef"></div>
<div class="t" style="left:770px;top:615px;width:106px;text-align:right;font-size:12.4px;color:#000">2,396,841</div>
<div style="position:absolute;left:1005px;top:613px;width:1px;height:21px;background:#e8ecef"></div>
<div class="t" style="left:882px;top:615px;width:118px;text-align:right;font-size:12.4px;color:#000">20,065,876</div>
<div style="position:absolute;left:1117px;top:613px;width:1px;height:21px;background:#e8ecef"></div>
<div class="t" style="left:1006px;top:615px;width:106px;text-align:right;font-size:12.4px;color:#000">0.1194</div>
<div style="position:absolute;left:79px;top:634px;width:1039px;height:21px;background:#fff"></div>
<div style="position:absolute;left:1118px;top:653px;width:440px;height:1px;background:#f0f0f0"></div>
<div style="position:absolute;left:49px;top:634px;width:29px;height:21px;background:#f5f5f5;border-bottom:1px solid #6a6a6a"></div>
<div style="position:absolute;left:77px;top:633px;width:1px;height:22px;background:#6a6a6a"></div>
<div class="t" style="left:54px;top:636px;font-size:13px;color:#000;">2</div>
<div style="position:absolute;left:165px;top:634px;width:1px;height:21px;background:#e8ecef"></div>
<div class="t" style="left:84px;top:636px;font-size:12.4px;color:#000;">2022</div>
<div style="position:absolute;left:253px;top:634px;width:1px;height:21px;background:#e8ecef"></div>
<div class="t" style="left:172px;top:636px;font-size:12.4px;color:#000;"><span class="cj" style="width:3em">江苏省</span></div>
<div style="position:absolute;left:401px;top:634px;width:1px;height:21px;background:#e8ecef"></div>
<div class="t" style="left:254px;top:636px;width:142px;text-align:right;font-size:12.4px;color:#000">345,825,280.5</div>
<div style="position:absolute;left:549px;top:634px;width:1px;height:21px;background:#e8ecef"></div>
<div class="t" style="left:402px;top:636px;width:142px;text-align:right;font-size:12.4px;color:#000">32,198.93</div>
<div style="position:absolute;left:769px;top:634px;width:1px;height:21px;background:#e8ecef"></div>
<div class="t" style="left:550px;top:636px;width:214px;text-align:right;font-size:12.4px;color:#000">345,857,479.43</div>
<div style="position:absolute;left:881px;top:634px;width:1px;height:21px;background:#e8ecef"></div>
<div class="t" style="left:770px;top:636px;width:106px;text-align:right;font-size:12.4px;color:#000">1,958,323</div>
<div style="position:absolute;left:1005px;top:634px;width:1px;height:21px;background:#e8ecef"></div>
<div class="t" style="left:882px;top:636px;width:118px;text-align:right;font-size:12.4px;color:#000">20,065,876</div>
<div style="position:absolute;left:1117px;top:634px;width:1px;height:21px;background:#e8ecef"></div>
<div class="t" style="left:1006px;top:636px;width:106px;text-align:right;font-size:12.4px;color:#000">0.0976</div>
<div style="position:absolute;left:79px;top:655px;width:1039px;height:21px;background:#dde9f6"></div>
<div style="position:absolute;left:1118px;top:674px;width:440px;height:1px;background:#f0f0f0"></div>
<div style="position:absolute;left:49px;top:655px;width:29px;height:21px;background:#f5f5f5;border-bottom:1px solid #6a6a6a"></div>
<div style="position:absolute;left:77px;top:654px;width:1px;height:22px;background:#6a6a6a"></div>
<div class="t" style="left:54px;top:657px;font-size:13px;color:#000;">3</div>
<div style="position:absolute;left:165px;top:655px;width:1px;height:21px;background:#e8ecef"></div>
<div class="t" style="left:84px;top:657px;font-size:12.4px;color:#000;">2022</div>
<div style="position:absolute;left:253px;top:655px;width:1px;height:21px;background:#e8ecef"></div>
<div class="t" style="left:172px;top:657px;font-size:12.4px;color:#000;"><span class="cj" style="width:3em">浙江省</span></div>
<div style="position:absolute;left:401px;top:655px;width:1px;height:21px;background:#e8ecef"></div>
<div class="t" style="left:254px;top:657px;width:142px;text-align:right;font-size:12.4px;color:#000">244,442,109.02</div>
<div style="position:absolute;left:549px;top:655px;width:1px;height:21px;background:#e8ecef"></div>
<div class="t" style="left:402px;top:657px;width:142px;text-align:right;font-size:12.4px;color:#000">27,857.55</div>
<div style="position:absolute;left:769px;top:655px;width:1px;height:21px;background:#e8ecef"></div>
<div class="t" style="left:550px;top:657px;width:214px;text-align:right;font-size:12.4px;color:#000">244,469,966.57</div>
<div style="position:absolute;left:881px;top:655px;width:1px;height:21px;background:#e8ecef"></div>
<div class="t" style="left:770px;top:657px;width:106px;text-align:right;font-size:12.4px;color:#000">1,471,158</div>
<div style="position:absolute;left:1005px;top:655px;width:1px;height:21px;background:#e8ecef"></div>
<div class="t" style="left:882px;top:657px;width:118px;text-align:right;font-size:12.4px;color:#000">20,065,876</div>
<div style="position:absolute;left:1117px;top:655px;width:1px;height:21px;background:#e8ecef"></div>
<div class="t" style="left:1006px;top:657px;width:106px;text-align:right;font-size:12.4px;color:#000">0.0733</div>
<div style="position:absolute;left:79px;top:676px;width:1039px;height:21px;background:#fff"></div>
<div style="position:absolute;left:1118px;top:695px;width:440px;height:1px;background:#f0f0f0"></div>
<div style="position:absolute;left:49px;top:676px;width:29px;height:21px;background:#f5f5f5;border-bottom:1px solid #6a6a6a"></div>
<div style="position:absolute;left:77px;top:675px;width:1px;height:22px;background:#6a6a6a"></div>
<div class="t" style="left:54px;top:678px;font-size:13px;color:#000;">4</div>
<div style="position:absolute;left:165px;top:676px;width:1px;height:21px;background:#e8ecef"></div>
<div class="t" style="left:84px;top:678px;font-size:12.4px;color:#000;">2022</div>
<div style="position:absolute;left:253px;top:676px;width:1px;height:21px;background:#e8ecef"></div>
<div class="t" style="left:172px;top:678px;font-size:12.4px;color:#000;"><span class="cj" style="width:3em">山东省</span></div>
<div style="position:absolute;left:401px;top:676px;width:1px;height:21px;background:#e8ecef"></div>
<div class="t" style="left:254px;top:678px;width:142px;text-align:right;font-size:12.4px;color:#000">236,668,449.58</div>
<div style="position:absolute;left:549px;top:676px;width:1px;height:21px;background:#e8ecef"></div>
<div class="t" style="left:402px;top:678px;width:142px;text-align:right;font-size:12.4px;color:#000">15,047.67</div>
<div style="position:absolute;left:769px;top:676px;width:1px;height:21px;background:#e8ecef"></div>
<div class="t" style="left:550px;top:678px;width:214px;text-align:right;font-size:12.4px;color:#000">236,683,497.25</div>
<div style="position:absolute;left:881px;top:676px;width:1px;height:21px;background:#e8ecef"></div>
<div class="t" style="left:770px;top:678px;width:106px;text-align:right;font-size:12.4px;color:#000">1,497,449</div>
<div style="position:absolute;left:1005px;top:676px;width:1px;height:21px;background:#e8ecef"></div>
<div class="t" style="left:882px;top:678px;width:118px;text-align:right;font-size:12.4px;color:#000">20,065,876</div>
<div style="position:absolute;left:1117px;top:676px;width:1px;height:21px;background:#e8ecef"></div>
<div class="t" style="left:1006px;top:678px;width:106px;text-align:right;font-size:12.4px;color:#000">0.0746</div>
<div style="position:absolute;left:79px;top:697px;width:1039px;height:21px;background:#dde9f6"></div>
<div style="position:absolute;left:1118px;top:716px;width:440px;height:1px;background:#f0f0f0"></div>
<div style="position:absolute;left:49px;top:697px;width:29px;height:21px;background:#f5f5f5;border-bottom:1px solid #6a6a6a"></div>
<div style="position:absolute;left:77px;top:696px;width:1px;height:22px;background:#6a6a6a"></div>
<div class="t" style="left:54px;top:699px;font-size:13px;color:#000;">5</div>
<div style="position:absolute;left:165px;top:697px;width:1px;height:21px;background:#e8ecef"></div>
<div class="t" style="left:84px;top:699px;font-size:12.4px;color:#000;">2022</div>
<div style="position:absolute;left:253px;top:697px;width:1px;height:21px;background:#e8ecef"></div>
<div class="t" style="left:172px;top:699px;font-size:12.4px;color:#000;"><span class="cj" style="width:3em">河南省</span></div>
<div style="position:absolute;left:401px;top:697px;width:1px;height:21px;background:#e8ecef"></div>
<div class="t" style="left:254px;top:699px;width:142px;text-align:right;font-size:12.4px;color:#000">171,192,835.49</div>
<div style="position:absolute;left:549px;top:697px;width:1px;height:21px;background:#e8ecef"></div>
<div class="t" style="left:402px;top:699px;width:142px;text-align:right;font-size:12.4px;color:#000">18,987.18</div>
<div style="position:absolute;left:769px;top:697px;width:1px;height:21px;background:#e8ecef"></div>
<div class="t" style="left:550px;top:699px;width:214px;text-align:right;font-size:12.4px;color:#000">171,211,822.67</div>
<div style="position:absolute;left:881px;top:697px;width:1px;height:21px;background:#e8ecef"></div>
<div class="t" style="left:770px;top:699px;width:106px;text-align:right;font-size:12.4px;color:#000">1,104,623</div>
<div style="position:absolute;left:1005px;top:697px;width:1px;height:21px;background:#e8ecef"></div>
<div class="t" style="left:882px;top:699px;width:118px;text-align:right;font-size:12.4px;color:#000">20,065,876</div>
<div style="position:absolute;left:1117px;top:697px;width:1px;height:21px;background:#e8ecef"></div>
<div class="t" style="left:1006px;top:699px;width:106px;text-align:right;font-size:12.4px;color:#000">0.055</div>
<div style="position:absolute;left:79px;top:718px;width:1039px;height:21px;background:#fff"></div>
<div style="position:absolute;left:1118px;top:737px;width:440px;height:1px;background:#f0f0f0"></div>
<div style="position:absolute;left:49px;top:718px;width:29px;height:21px;background:#f5f5f5;border-bottom:1px solid #6a6a6a"></div>
<div style="position:absolute;left:77px;top:717px;width:1px;height:22px;background:#6a6a6a"></div>
<div class="t" style="left:54px;top:720px;font-size:13px;color:#000;">6</div>
<div style="position:absolute;left:165px;top:718px;width:1px;height:21px;background:#e8ecef"></div>
<div class="t" style="left:84px;top:720px;font-size:12.4px;color:#000;">2022</div>
<div style="position:absolute;left:253px;top:718px;width:1px;height:21px;background:#e8ecef"></div>
<div class="t" style="left:172px;top:720px;font-size:12.4px;color:#000;"><span class="cj" style="width:3em">安徽省</span></div>
<div style="position:absolute;left:401px;top:718px;width:1px;height:21px;background:#e8ecef"></div>
<div class="t" style="left:254px;top:720px;width:142px;text-align:right;font-size:12.4px;color:#000">159,274,515.09</div>
<div style="position:absolute;left:549px;top:718px;width:1px;height:21px;background:#e8ecef"></div>
<div class="t" style="left:402px;top:720px;width:142px;text-align:right;font-size:12.4px;color:#000">10,252.59</div>
<div style="position:absolute;left:769px;top:718px;width:1px;height:21px;background:#e8ecef"></div>
<div class="t" style="left:550px;top:720px;width:214px;text-align:right;font-size:12.4px;color:#000">159,284,767.68</div>
<div style="position:absolute;left:881px;top:718px;width:1px;height:21px;background:#e8ecef"></div>
<div class="t" style="left:770px;top:720px;width:106px;text-align:right;font-size:12.4px;color:#000">973,680</div>
<div style="position:absolute;left:1005px;top:718px;width:1px;height:21px;background:#e8ecef"></div>
<div class="t" style="left:882px;top:720px;width:118px;text-align:right;font-size:12.4px;color:#000">20,065,876</div>
<div style="position:absolute;left:1117px;top:718px;width:1px;height:21px;background:#e8ecef"></div>
<div class="t" style="left:1006px;top:720px;width:106px;text-align:right;font-size:12.4px;color:#000">0.0485</div>
<div style="position:absolute;left:79px;top:739px;width:1039px;height:21px;background:#dde9f6"></div>
<div style="position:absolute;left:1118px;top:758px;width:440px;height:1px;background:#f0f0f0"></div>
<div style="position:absolute;left:49px;top:739px;width:29px;height:21px;background:#f5f5f5;border-bottom:1px solid #6a6a6a"></div>
<div style="position:absolute;left:77px;top:738px;width:1px;height:22px;background:#6a6a6a"></div>
<div class="t" style="left:54px;top:741px;font-size:13px;color:#000;">7</div>
<div style="position:absolute;left:165px;top:739px;width:1px;height:21px;background:#e8ecef"></div>
<div class="t" style="left:84px;top:741px;font-size:12.4px;color:#000;">2022</div>
<div style="position:absolute;left:253px;top:739px;width:1px;height:21px;background:#e8ecef"></div>
<div class="t" style="left:172px;top:741px;font-size:12.4px;color:#000;"><span class="cj" style="width:3em">四川省</span></div>
<div style="position:absolute;left:401px;top:739px;width:1px;height:21px;background:#e8ecef"></div>
<div class="t" style="left:254px;top:741px;width:142px;text-align:right;font-size:12.4px;color:#000">155,952,410.95</div>
<div style="position:absolute;left:549px;top:739px;width:1px;height:21px;background:#e8ecef"></div>
<div class="t" style="left:402px;top:741px;width:142px;text-align:right;font-size:12.4px;color:#000">34,469.98</div>
<div style="position:absolute;left:769px;top:739px;width:1px;height:21px;background:#e8ecef"></div>
<div class="t" style="left:550px;top:741px;width:214px;text-align:right;font-size:12.4px;color:#000">155,986,880.93</div>
<div style="position:absolute;left:881px;top:739px;width:1px;height:21px;background:#e8ecef"></div>
<div class="t" style="left:770px;top:741px;width:106px;text-align:right;font-size:12.4px;color:#000">918,580</div>
<div style="position:absolute;left:1005px;top:739px;width:1px;height:21px;background:#e8ecef"></div>
<div class="t" style="left:882px;top:741px;width:118px;text-align:right;font-size:12.4px;color:#000">20,065,876</div>
<div style="position:absolute;left:1117px;top:739px;width:1px;height:21px;background:#e8ecef"></div>
<div class="t" style="left:1006px;top:741px;width:106px;text-align:right;font-size:12.4px;color:#000">0.0458</div>
<div style="position:absolute;left:79px;top:760px;width:1039px;height:21px;background:#fff"></div>
<div style="position:absolute;left:1118px;top:779px;width:440px;height:1px;background:#f0f0f0"></div>
<div style="position:absolute;left:49px;top:760px;width:29px;height:21px;background:#f5f5f5;border-bottom:1px solid #6a6a6a"></div>
<div style="position:absolute;left:77px;top:759px;width:1px;height:22px;background:#6a6a6a"></div>
<div class="t" style="left:54px;top:762px;font-size:13px;color:#000;">8</div>
<div style="position:absolute;left:165px;top:760px;width:1px;height:21px;background:#e8ecef"></div>
<div class="t" style="left:84px;top:762px;font-size:12.4px;color:#000;">2022</div>
<div style="position:absolute;left:253px;top:760px;width:1px;height:21px;background:#e8ecef"></div>
<div class="t" style="left:172px;top:762px;font-size:12.4px;color:#000;"><span class="cj" style="width:2em">上海</span></div>
<div style="position:absolute;left:401px;top:760px;width:1px;height:21px;background:#e8ecef"></div>
<div class="t" style="left:254px;top:762px;width:142px;text-align:right;font-size:12.4px;color:#000">145,581,289.08</div>
<div style="position:absolute;left:549px;top:760px;width:1px;height:21px;background:#e8ecef"></div>
<div class="t" style="left:402px;top:762px;width:142px;text-align:right;font-size:12.4px;color:#000">37,827.32</div>
<div style="position:absolute;left:769px;top:760px;width:1px;height:21px;background:#e8ecef"></div>
<div class="t" style="left:550px;top:762px;width:214px;text-align:right;font-size:12.4px;color:#000">145,619,116.4</div>
<div style="position:absolute;left:881px;top:760px;width:1px;height:21px;background:#e8ecef"></div>
<div class="t" style="left:770px;top:762px;width:106px;text-align:right;font-size:12.4px;color:#000">712,850</div>
<div style="position:absolute;left:1005px;top:760px;width:1px;height:21px;background:#e8ecef"></div>
<div class="t" style="left:882px;top:762px;width:118px;text-align:right;font-size:12.4px;color:#000">20,065,876</div>
<div style="position:absolute;left:1117px;top:760px;width:1px;height:21px;background:#e8ecef"></div>
<div class="t" style="left:1006px;top:762px;width:106px;text-align:right;font-size:12.4px;color:#000">0.0355</div>
<div style="position:absolute;left:79px;top:781px;width:1039px;height:21px;background:#dde9f6"></div>
<div style="position:absolute;left:1118px;top:800px;width:440px;height:1px;background:#f0f0f0"></div>
<div style="position:absolute;left:49px;top:781px;width:29px;height:21px;background:#f5f5f5;border-bottom:1px solid #6a6a6a"></div>
<div style="position:absolute;left:77px;top:780px;width:1px;height:22px;background:#6a6a6a"></div>
<div class="t" style="left:54px;top:783px;font-size:13px;color:#000;">9</div>
<div style="position:absolute;left:165px;top:781px;width:1px;height:21px;background:#e8ecef"></div>
<div class="t" style="left:84px;top:783px;font-size:12.4px;color:#000;">2022</div>
<div style="position:absolute;left:253px;top:781px;width:1px;height:21px;background:#e8ecef"></div>
<div class="t" style="left:172px;top:783px;font-size:12.4px;color:#000;"><span class="cj" style="width:2em">北京</span></div>
<div style="position:absolute;left:401px;top:781px;width:1px;height:21px;background:#e8ecef"></div>
<div class="t" style="left:254px;top:783px;width:142px;text-align:right;font-size:12.4px;color:#000">136,043,662.33</div>
<div style="position:absolute;left:549px;top:781px;width:1px;height:21px;background:#e8ecef"></div>
<div class="t" style="left:402px;top:783px;width:142px;text-align:right;font-size:12.4px;color:#000">41,896.72</div>
<div style="position:absolute;left:769px;top:781px;width:1px;height:21px;background:#e8ecef"></div>
<div class="t" style="left:550px;top:783px;width:214px;text-align:right;font-size:12.4px;color:#000">136,085,559.05</div>
<div style="position:absolute;left:881px;top:781px;width:1px;height:21px;background:#e8ecef"></div>
<div class="t" style="left:770px;top:783px;width:106px;text-align:right;font-size:12.4px;color:#000">681,400</div>
<div style="position:absolute;left:1005px;top:781px;width:1px;height:21px;background:#e8ecef"></div>
<div class="t" style="left:882px;top:783px;width:118px;text-align:right;font-size:12.4px;color:#000">20,065,876</div>
<div style="position:absolute;left:1117px;top:781px;width:1px;height:21px;background:#e8ecef"></div>
<div class="t" style="left:1006px;top:783px;width:106px;text-align:right;font-size:12.4px;color:#000">0.034</div>
<div style="position:absolute;left:78px;top:612px;width:88px;height:21px;background:#6aaae0;border:2px solid #111"></div>
<div class="t" style="left:84px;top:615px;font-size:12.4px;color:#fff;">2022</div>
<div style="position:absolute;left:1558px;top:584px;width:15px;height:217px;background:#f5f5f5"></div>
<div style="position:absolute;left:1558px;top:601px;width:15px;height:17px;background:#cbd0cc"></div>
<svg style="position:absolute;left:1561px;top:589px;" width="10" height="8" viewBox="0 0 10 8"><path d="M1.5 6.5 L5 3 L8.5 6.5" stroke="#555" stroke-width="1.8" fill="none"/></svg>
<svg style="position:absolute;left:1561px;top:790px;" width="10" height="8" viewBox="0 0 10 8"><path d="M1.5 1.5 L5 5 L8.5 1.5" stroke="#555" stroke-width="1.8" fill="none"/></svg>
<svg style="position:absolute;left:0;top:0" width="1600" height="840" viewBox="0 0 1600 840"><rect x="1580.6" y="593.6" width="12.8" height="12.8" fill="#fff" stroke="#0e8ad6" stroke-width="1.3"/><rect x="1585.3" y="594.2" width="5.5" height="7" fill="#66cdf0"/><rect x="1590.8" y="593" width="3.2" height="14" fill="#0e8ad6"/><path d="M1585 594 V601 H1591" stroke="#0e8ad6" stroke-width="1" fill="none"/><circle cx="1582.5" cy="604.5" r="3.6" fill="#f7f7f7"/><path d="M1582.5 601 V608 M1579 604.5 H1586 M1580 602 L1585 607 M1585 602 L1580 607" stroke="#0e8ad6" stroke-width="1.1"/><circle cx="1582.5" cy="604.5" r="1.8" fill="#0e8ad6"/><circle cx="1582.5" cy="604.5" r="0.8" fill="#fff"/><rect x="1578.6" y="651.6" width="13.8" height="13" fill="#fff" stroke="#0e8ad6" stroke-width="1.2"/><rect x="1579" y="652" width="13" height="6.5" fill="#0e8ad6"/><rect x="1579.8" y="652.5" width="2" height="2" fill="#d8f0fb"/><rect x="1579.8" y="656.5" width="2" height="2" fill="#d8f0fb"/><rect x="1581.8" y="654.5" width="2" height="2" fill="#d8f0fb"/><rect x="1583.8" y="652.5" width="2" height="2" fill="#d8f0fb"/><rect x="1583.8" y="656.5" width="2" height="2" fill="#d8f0fb"/><rect x="1585.8" y="654.5" width="2" height="2" fill="#d8f0fb"/><rect x="1587.8" y="652.5" width="2" height="2" fill="#d8f0fb"/><rect x="1587.8" y="656.5" width="2" height="2" fill="#d8f0fb"/><rect x="1589.8" y="654.5" width="2" height="2" fill="#d8f0fb"/><rect x="1579.2" y="658.5" width="12.6" height="5.5" fill="#e8f4fb"/><circle cx="1585.5" cy="679.5" r="6.5" fill="none" stroke="#0e8ad6" stroke-width="1.3"/><circle cx="1583.3" cy="677.3" r="1.1" fill="#0e8ad6"/><circle cx="1587.7" cy="677.3" r="1.1" fill="#0e8ad6"/><circle cx="1583.3" cy="681.7" r="1.1" fill="#0e8ad6"/><circle cx="1587.7" cy="681.7" r="1.1" fill="#0e8ad6"/><rect x="1578.6" y="698.6" width="13.8" height="11" fill="#fff" stroke="#0e8ad6" stroke-width="1.2"/><rect x="1578.6" y="698.6" width="13.8" height="2.4" fill="#0e8ad6"/><path d="M1578.6 703.6 H1592.4 M1578.6 706.6 H1592.4 M1582 699 V709.6 M1589 699 V709.6" stroke="#0e8ad6" stroke-width="0.9"/><rect x="1582.3" y="698.3" width="3.4" height="11.4" fill="none" stroke="#f58a1f" stroke-width="1.2"/><path d="M1584 694 V697.5 M1582.5 696 L1584 697.8 L1585.5 696" stroke="#f58a1f" stroke-width="1.1" fill="none"/><rect x="1578.6" y="716.6" width="13.8" height="13.8" fill="#fff" stroke="#0e8ad6" stroke-width="1.2"/><rect x="1578.6" y="716.6" width="13.8" height="2.4" fill="#0e8ad6"/><rect x="1579.5" y="719.5" width="6" height="5" fill="#66cdf0" stroke="#0e8ad6" stroke-width="0.8"/><rect x="1585.8" y="726" width="7" height="5" fill="#f7f7f7"/><path d="M1586.5 728.5 H1592 M1586.5 726.8 V730.2 M1592 726.8 V730.2" stroke="#0e8ad6" stroke-width="1"/><circle cx="1581.5" cy="742" r="3.2" fill="#0e8ad6"/><path d="M1579.6 742 H1583.4" stroke="#fff" stroke-width="1.1"/><circle cx="1589.5" cy="742" r="3.2" fill="#0e8ad6"/><path d="M1588 742 H1591.5 M1589 740.5 L1587.6 742 L1589 743.5" stroke="#fff" stroke-width="0.9" fill="none"/><circle cx="1581.5" cy="750" r="2.9" fill="#fff" stroke="#0e8ad6" stroke-width="1.1"/><path d="M1579.8 748.3 L1583.2 751.7 M1583.2 748.3 L1579.8 751.7" stroke="#0e8ad6" stroke-width="0.9"/><circle cx="1589.5" cy="750" r="3.2" fill="#f58a1f"/><path d="M1587.8 749.2 H1591.2 M1587.8 750.8 H1591.2" stroke="#fff" stroke-width="0.8"/><rect x="1578" y="816" width="4.5" height="14" rx="1.5" fill="#0e8ad6"/><path d="M1591.5 824.5 Q1591.5 818.8 1587 818.8" stroke="#0e8ad6" stroke-width="1.4" fill="none"/><path d="M1588 816.5 L1584.8 818.8 L1588 821.2 Z" fill="#0e8ad6"/><rect x="1584.5" y="826" width="8" height="4" rx="1" fill="#0e8ad6"/></svg>
<div class="t" style="top:621px;font-size:12.5px;color:#000;transform:translate(-50%,-50%) rotate(90deg);left:1587px"><span class="cj" style="width:2em">面板</span></div>
<svg style="position:absolute;left:59px;top:809px;" width="15" height="15" viewBox="0 0 15 15"><path d="M2 6 A6 6 0 0 1 12 3.5" stroke="#1e88d8" stroke-width="2" fill="none"/><path d="M13 9 A6 6 0 0 1 3 11.5" stroke="#1e88d8" stroke-width="2" fill="none"/><path d="M10 0.5 L14 4 L9.5 5.5 Z M5 15 L1 11 L5.5 9.5 Z" fill="#1e88d8"/><path d="M5 7.5 L7.5 5 L10 7.5 L7.5 10 Z" fill="#f2b100"/></svg>
<div class="t" style="left:79px;top:810px;font-size:13px;color:#000;"><span class="cj" style="width:2em">刷新</span></div>
<svg style="position:absolute;left:117px;top:815px;" width="7" height="4" viewBox="0 0 7 4"><path d="M0 0 H7 L3.5 4 Z" fill="#222"/></svg>
<div style="position:absolute;left:134px;top:808px;width:2px;height:17px;background:repeating-linear-gradient(#b5ae9b 0 2px,transparent 2px 4px)"></div>
<svg style="position:absolute;left:145px;top:809px;" width="16" height="16" viewBox="0 0 16 16"><circle cx="8" cy="8" r="7" fill="none" stroke="#a8a8a8" stroke-width="1.2"/><path d="M4.5 8 L7 10.5 L11.5 5.5" stroke="#a8a8a8" stroke-width="1.3" fill="none"/></svg>
<div class="t" style="left:165px;top:810px;font-size:13px;color:#a8a8a8;"><span class="cj" style="width:2em">保存</span></div>
<svg style="position:absolute;left:203px;top:815px;" width="8" height="5" viewBox="0 0 8 5"><path d="M0 0 H8 L4 5 Z" fill="#777"/></svg>
<svg style="position:absolute;left:221px;top:810px;" width="13" height="13" viewBox="0 0 13 13"><rect x="0.5" y="0.5" width="12" height="12" fill="none" stroke="#a8a8a8"/><path d="M3.5 3.5 L9.5 9.5 M9.5 3.5 L3.5 9.5" stroke="#a8a8a8" stroke-width="1.1"/></svg>
<div class="t" style="left:238px;top:810px;font-size:13px;color:#a8a8a8;"><span class="cj" style="width:2em">取消</span></div>
<div style="position:absolute;left:273px;top:804px;width:1px;height:26px;background:#777"></div>
<svg style="position:absolute;left:283px;top:810px;" width="16" height="15" viewBox="0 0 16 15"><path d="M0 1.5 H14 M0 6 H10 M0 10.5 H6 M2 14 H8" stroke="#1e88d8" stroke-width="1.5"/><path d="M9 14 L15 8" stroke="#1e88d8" stroke-width="1.8"/></svg>
<svg style="position:absolute;left:308px;top:810px;" width="15" height="15" viewBox="0 0 15 15"><path d="M0 1.5 H14 M0 6 H6 M0 10.5 H6" stroke="#999" stroke-width="1.5"/><path d="M10.5 6 V14 M6.5 10 H14.5" stroke="#999" stroke-width="1.6"/></svg>
<svg style="position:absolute;left:332px;top:810px;" width="15" height="15" viewBox="0 0 15 15"><path d="M0 1.5 H14 M0 6 H3 M0 10.5 H3" stroke="#999" stroke-width="1.5"/><circle cx="9" cy="9" r="4.5" fill="none" stroke="#999" stroke-width="1.2"/><path d="M9 6.5 V11.5 M6.5 9 H11.5" stroke="#999" stroke-width="1.1"/></svg>
<svg style="position:absolute;left:356px;top:810px;" width="15" height="15" viewBox="0 0 15 15"><path d="M0 1.5 H14 M0 6 H5 M0 10.5 H5 M8 8 H15" stroke="#999" stroke-width="1.5"/></svg>
<div style="position:absolute;left:379px;top:808px;width:2px;height:17px;background:repeating-linear-gradient(#b5ae9b 0 2px,transparent 2px 4px)"></div>
<svg style="position:absolute;left:388px;top:810px;" width="12" height="14" viewBox="0 0 12 14"><path d="M1 0 V14" stroke="#999" stroke-width="1.6"/><path d="M11 1 L5 7 L11 13" stroke="#999" stroke-width="1.8" fill="none"/></svg>
<svg style="position:absolute;left:413px;top:810px;" width="8" height="14" viewBox="0 0 8 14"><path d="M7 1 L1.5 7 L7 13" stroke="#999" stroke-width="1.8" fill="none"/></svg>
<svg style="position:absolute;left:437px;top:810px;" width="8" height="14" viewBox="0 0 8 14"><path d="M1 1 L6.5 7 L1 13" stroke="#1e88d8" stroke-width="1.8" fill="none"/></svg>
<svg style="position:absolute;left:456px;top:810px;" width="13" height="14" viewBox="0 0 13 14"><path d="M1 1 L7 7 L1 13" stroke="#1e88d8" stroke-width="1.8" fill="none"/><path d="M11.5 0 V14" stroke="#1e88d8" stroke-width="1.6"/></svg>
<svg style="position:absolute;left:479px;top:810px;" width="14" height="14" viewBox="0 0 14 14"><path d="M0.5 3 V0.5 H3 M11 0.5 H13.5 V3 M13.5 11 V13.5 H11 M3 13.5 H0.5 V11" stroke="#999" stroke-width="1" fill="none"/><rect x="4" y="4" width="6" height="6" fill="none" stroke="#999"/></svg>
<div style="position:absolute;left:502px;top:808px;width:2px;height:17px;background:repeating-linear-gradient(#b5ae9b 0 2px,transparent 2px 4px)"></div>
<svg style="position:absolute;left:516px;top:808px;" width="15" height="16" viewBox="0 0 15 16"><path d="M7.5 1 V11 M3 5.5 L7.5 1 L12 5.5" stroke="#1e88d8" stroke-width="1.6" fill="none"/><path d="M1 9 V15 H14 V9" stroke="#1e88d8" stroke-width="1.5" fill="none"/></svg>
<div class="t" style="left:535px;top:810px;font-size:13px;color:#000;"><span class="cj" style="width:4em">导出数据</span>...</div>
<svg style="position:absolute;left:607px;top:815px;" width="7" height="4" viewBox="0 0 7 4"><path d="M0 0 H7 L3.5 4 Z" fill="#222"/></svg>
<div style="position:absolute;left:625px;top:808px;width:2px;height:17px;background:repeating-linear-gradient(#b5ae9b 0 2px,transparent 2px 4px)"></div>
<svg style="position:absolute;left:631px;top:810px;" width="15" height="15" viewBox="0 0 15 15"><rect x="5.8" y="0.2" width="3.4" height="3.5" fill="#0e8ad6" transform="rotate(0 7.5 7.5)"/><rect x="5.8" y="0.2" width="3.4" height="3.5" fill="#0e8ad6" transform="rotate(45 7.5 7.5)"/><rect x="5.8" y="0.2" width="3.4" height="3.5" fill="#0e8ad6" transform="rotate(90 7.5 7.5)"/><rect x="5.8" y="0.2" width="3.4" height="3.5" fill="#0e8ad6" transform="rotate(135 7.5 7.5)"/><rect x="5.8" y="0.2" width="3.4" height="3.5" fill="#0e8ad6" transform="rotate(180 7.5 7.5)"/><rect x="5.8" y="0.2" width="3.4" height="3.5" fill="#0e8ad6" transform="rotate(225 7.5 7.5)"/><rect x="5.8" y="0.2" width="3.4" height="3.5" fill="#0e8ad6" transform="rotate(270 7.5 7.5)"/><rect x="5.8" y="0.2" width="3.4" height="3.5" fill="#0e8ad6" transform="rotate(315 7.5 7.5)"/><circle cx="7.5" cy="7.5" r="5.2" fill="#0e8ad6"/><circle cx="7.5" cy="7.5" r="2.3" fill="#62c3f2"/></svg>
<div style="position:absolute;left:653px;top:806px;width:55px;height:22px;background:#fff;border:1px solid #a8a8a8"></div>
<div class="t" style="left:657px;top:810px;font-size:13px;color:#000;">200</div>
<svg style="position:absolute;left:713px;top:808px;" width="16" height="17" viewBox="0 0 16 17"><path d="M1.5 2 L8 8 L14.5 2" stroke="#0e8ad6" stroke-width="1.5" fill="none"/><path d="M8 5 V12 M5.5 9.5 L8 12 L10.5 9.5" stroke="#0e8ad6" stroke-width="1.3" fill="none"/><path d="M1 12 V15.5 H15 V12" stroke="#0e8ad6" stroke-width="1.3" fill="none"/></svg>
<div class="t" style="left:737px;top:810px;font-size:13px;color:#000;">176</div>
<div style="position:absolute;left:767px;top:808px;width:2px;height:17px;background:repeating-linear-gradient(#b5ae9b 0 2px,transparent 2px 4px)"></div>
<div class="t" style="left:795px;top:809px;font-size:10px;color:#555;">···</div>
<div class="t" style="left:812px;top:810px;font-size:12.3px;color:#000;">176 <span class="cj" style="width:4em">行已获取</span> - 11.297s (3ms <span class="cj" style="width:2em">获取</span>), 2025-10-21 20:14:58</div>
<div style="position:absolute;left:0px;top:834px;width:1600px;height:26px;background:#f5f5f5"></div>
<div style="position:absolute;left:779px;top:836px;width:1px;height:20px;background:#b8b8b8"></div>
<div style="position:absolute;left:814px;top:836px;width:1px;height:20px;background:#b8b8b8"></div>
<div style="position:absolute;left:841px;top:836px;width:1px;height:20px;background:#b8b8b8"></div>
<div style="position:absolute;left:975px;top:836px;width:1px;height:20px;background:#b8b8b8"></div>
<div style="position:absolute;left:1103px;top:836px;width:1px;height:20px;background:#b8b8b8"></div>
<div style="position:absolute;left:1231px;top:836px;width:1px;height:20px;background:#b8b8b8"></div>
<div class="t" style="left:786px;top:837px;font-size:12.3px;color:#000;">CST</div>
<div class="t" style="left:822px;top:837px;font-size:12.3px;color:#000;">zh</div>
<div class="t" style="left:849px;top:837px;font-size:12.3px;color:#000;"><span class="cj" style="width:2em">可写</span></div>
<div class="t" style="left:982px;top:837px;font-size:12.3px;color:#000;"><span class="cj" style="width:4em">智能插入</span></div>
<div class="t" style="left:1111px;top:837px;font-size:12.3px;color:#000;">959 : 1 : 39421</div>
<div class="t" style="left:1239px;top:837px;font-size:12.3px;color:#000;">Sel: 0 | 0</div>
<div style="position:absolute;left:1315px;top:840px;width:2px;height:16px;background:repeating-linear-gradient(#b5ae9b 0 2px,transparent 2px 4px)"></div>
<div style="position:absolute;left:0px;top:860px;width:1600px;height:40px;background:#000"></div>
<div style="position:absolute;left:294px;top:860px;width:48px;height:40px;background:#333"></div>
<div style="position:absolute;left:294px;top:898px;width:48px;height:2px;background:#76b9ed"></div>
<svg style="position:absolute;left:0;top:860px" width="140" height="40" viewBox="0 860 140 40"><path d="M16 873.6 L22 872.8 V879 H16 Z M23 872.6 L32 871.8 V879 H23 Z M16 880 H22 V886.2 L16 885.4 Z M23 880 H32 V888.2 L23 887.4 Z" fill="#fff"/><path d="M112.5 874.5 V872 M112.5 873.5 H122.5 M122.5 874.5 V872 M112.5 887 V885 M112.5 885.5 H122.5 M122.5 887 V885" stroke="#fff" stroke-width="1" fill="none"/><rect x="112.5" y="876.5" width="10" height="6" fill="none" stroke="#fff" stroke-width="1"/><path d="M126.5 872 V875 M126.5 880 V887" stroke="#fff" stroke-width="1"/><rect x="125.5" y="876.5" width="2.2" height="2.5" fill="#fff"/><circle cx="74.5" cy="877.5" r="5" stroke="#fff" stroke-width="1.1" fill="none"/><path d="M70.8 881.2 L64.3 887.7" stroke="#fff" stroke-width="1.1"/></svg>
<svg style="position:absolute;left:158px;top:866px;" width="26" height="26" viewBox="0 0 26 26"><circle cx="13" cy="14" r="6.4" stroke="#38b2ee" stroke-width="4.2" fill="none"/><path d="M13 15.2 L24 15.2 L24 21 L16 21 Z" fill="#000"/><rect x="8.5" y="12.6" width="12" height="2.4" fill="#38b2ee"/><path d="M3.5 24 Q0.5 20.5 8 11.5 Q16 3.5 22 2.8 Q25 2.8 23.5 6.2" stroke="#e8b800" stroke-width="1.4" fill="none"/></svg>
<svg style="position:absolute;left:208px;top:870px;" width="24" height="20" viewBox="0 0 24 20"><path d="M1 1.5 H8 L9.5 3 H22.5 V18.5 H1 Z" fill="#f3d46b"/><path d="M1 4.5 H22.5 V18.5 H1 Z" fill="#fde48f"/><rect x="2" y="2" width="5" height="1.5" fill="#fff6c8"/><path d="M5 10 H19 V19 H16 V14 H8 V19 H5 Z" fill="#2aa6ea"/></svg>
<svg style="position:absolute;left:255px;top:866px;" width="28" height="28" viewBox="0 0 28 28"><circle cx="13.9" cy="14" r="10.9" fill="#fff" stroke="#4cbfc4" stroke-width="2"/><circle cx="12.3" cy="9" r="0.9" fill="#2a2420"/><ellipse cx="18" cy="10" rx="2" ry="1.2" fill="#2a2420"/><path d="M6.5 10 Q5 13 6 17 L7 16.5 Q6.5 13 8 10.5 Z" fill="#3a2c24"/><path d="M7.5 9.5 Q10 6.5 15 6" stroke="#666" stroke-width="0.7" fill="none"/><path d="M10.5 23.5 L12 15.5 Q15 17 17 17.5 L19.5 14 L20.5 18 L18.5 22 Q15 24.8 10.5 23.5 Z" fill="#3a2c24"/><rect x="17" y="18" width="1.3" height="1.3" fill="#fff"/></svg>
<svg style="position:absolute;left:303px;top:866px;" width="28" height="28" viewBox="0 0 28 28"><circle cx="13.9" cy="14" r="10.9" fill="#fff" stroke="#4cbfc4" stroke-width="2"/><circle cx="12.3" cy="9" r="0.9" fill="#2a2420"/><ellipse cx="18" cy="10" rx="2" ry="1.2" fill="#2a2420"/><path d="M6.5 10 Q5 13 6 17 L7 16.5 Q6.5 13 8 10.5 Z" fill="#3a2c24"/><path d="M7.5 9.5 Q10 6.5 15 6" stroke="#666" stroke-width="0.7" fill="none"/><path d="M10.5 23.5 L12 15.5 Q15 17 17 17.5 L19.5 14 L20.5 18 L18.5 22 Q15 24.8 10.5 23.5 Z" fill="#3a2c24"/><rect x="17" y="18" width="1.3" height="1.3" fill="#fff"/></svg>
<svg style="position:absolute;left:1347px;top:875px;" width="14" height="8" viewBox="0 0 14 8"><path d="M1 7 L7 1 L13 7" stroke="#fff" stroke-width="1.3" fill="none"/></svg>
<svg style="position:absolute;left:1372px;top:870px;" width="12" height="18" viewBox="0 0 12 18"><rect x="2.5" y="0.5" width="6" height="4" fill="none" stroke="#fff"/><rect x="1" y="4.5" width="9" height="12" fill="none" stroke="#fff"/><path d="M7 15 L9 17 L12 13" stroke="#fff" stroke-width="1" fill="none"/></svg>
<svg style="position:absolute;left:1393px;top:872px;" width="18" height="15" viewBox="0 0 18 15"><rect x="3.5" y="1.5" width="14" height="9" fill="none" stroke="#fff" stroke-width="1.2"/><path d="M10 11 V14 M6 14 H14" stroke="#fff" stroke-width="1.2"/><rect x="0" y="0" width="6" height="6" fill="#000"/><path d="M0.5 2 H4 V5" stroke="#fff" fill="none"/></svg>
<svg style="position:absolute;left:1418px;top:872px;" width="17" height="15" viewBox="0 0 17 15"><path d="M1 5 H4 L8 1.5 V13.5 L4 10 H1 Z" fill="none" stroke="#fff" stroke-width="1.1"/><path d="M10.5 5 A3 3 0 0 1 10.5 10 M12.5 3 A6 6 0 0 1 12.5 12 M14.5 1 A9 9 0 0 1 14.5 14" stroke="#fff" stroke-width="1" fill="none"/></svg>
<div class="t" style="left:1443px;top:872px;font-size:12.5px;color:#fff;">ENG</div>
<div class="t" style="left:1494px;top:863px;font-size:12.5px;color:#fff;">20:15</div>
<div class="t" style="left:1477px;top:883px;font-size:12.5px;color:#fff;">2025/10/21</div>
<svg style="position:absolute;left:1559px;top:872px;" width="17" height="16" viewBox="0 0 17 16"><path d="M0.6 0.6 H16.4 V12.4 H10.5 L8.5 14.8 L6.5 12.4 H0.6 Z" fill="none" stroke="#fff" stroke-width="1.1"/></svg>
<div style="position:absolute;left:1596px;top:860px;width:1px;height:40px;background:#555"></div>
<div style="position:absolute;left:0;top:0;width:1600px;height:860px;overflow:hidden;pointer-events:none"><div class="wm" style="left:-293px;top:-172px">audit<span class="cj" style="width:2em">审计</span>01(Audit1)
audit-172.18.210.237</div><div class="wm" style="left:7px;top:-172px">audit<span class="cj" style="width:2em">审计</span>01(Audit1)
audit-172.18.210.237</div><div class="wm" style="left:307px;top:-172px">audit<span class="cj" style="width:2em">审计</span>01(Audit1)
audit-172.18.210.237</div><div class="wm" style="left:607px;top:-172px">audit<span class="cj" style="width:2em">审计</span>01(Audit1)
audit-172.18.210.237</div><div class="wm" style="left:907px;top:-172px">audit<span class="cj" style="width:2em">审计</span>01(Audit1)
audit-172.18.210.237</div><div class="wm" style="left:1207px;top:-172px">audit<span class="cj" style="width:2em">审计</span>01(Audit1)
audit-172.18.210.237</div><div class="wm" style="left:1507px;top:-172px">audit<span class="cj" style="width:2em">审计</span>01(Audit1)
audit-172.18.210.237</div><div class="wm" style="left:-293px;top:130px">audit<span class="cj" style="width:2em">审计</span>01(Audit1)
audit-172.18.210.237</div><div class="wm" style="left:7px;top:130px">audit<span class="cj" style="width:2em">审计</span>01(Audit1)
audit-172.18.210.237</div><div class="wm" style="left:307px;top:130px">audit<span class="cj" style="width:2em">审计</span>01(Audit1)
audit-172.18.210.237</div><div class="wm" style="left:607px;top:130px">audit<span class="cj" style="width:2em">审计</span>01(Audit1)
audit-172.18.210.237</div><div class="wm" style="left:907px;top:130px">audit<span class="cj" style="width:2em">审计</span>01(Audit1)
audit-172.18.210.237</div><div class="wm" style="left:1207px;top:130px">audit<span class="cj" style="width:2em">审计</span>01(Audit1)
audit-172.18.210.237</div><div class="wm" style="left:1507px;top:130px">audit<span class="cj" style="width:2em">审计</span>01(Audit1)
audit-172.18.210.237</div><div class="wm" style="left:-293px;top:432px">audit<span class="cj" style="width:2em">审计</span>01(Audit1)
audit-172.18.210.237</div><div class="wm" style="left:7px;top:432px">audit<span class="cj" style="width:2em">审计</span>01(Audit1)
audit-172.18.210.237</div><div class="wm" style="left:307px;top:432px">audit<span class="cj" style="width:2em">审计</span>01(Audit1)
audit-172.18.210.237</div><div class="wm" style="left:607px;top:432px">audit<span class="cj" style="width:2em">审计</span>01(Audit1)
audit-172.18.210.237</div><div class="wm" style="left:907px;top:432px">audit<span class="cj" style="width:2em">审计</span>01(Audit1)
audit-172.18.210.237</div><div class="wm" style="left:1207px;top:432px">audit<span class="cj" style="width:2em">审计</span>01(Audit1)
audit-172.18.210.237</div><div class="wm" style="left:1507px;top:432px">audit<span class="cj" style="width:2em">审计</span>01(Audit1)
audit-172.18.210.237</div><div class="wm" style="left:-293px;top:734px">audit<span class="cj" style="width:2em">审计</span>01(Audit1)
audit-172.18.210.237</div><div class="wm" style="left:7px;top:734px">audit<span class="cj" style="width:2em">审计</span>01(Audit1)
audit-172.18.210.237</div><div class="wm" style="left:307px;top:734px">audit<span class="cj" style="width:2em">审计</span>01(Audit1)
audit-172.18.210.237</div><div class="wm" style="left:607px;top:734px">audit<span class="cj" style="width:2em">审计</span>01(Audit1)
audit-172.18.210.237</div><div class="wm" style="left:907px;top:734px">audit<span class="cj" style="width:2em">审计</span>01(Audit1)
audit-172.18.210.237</div><div class="wm" style="left:1207px;top:734px">audit<span class="cj" style="width:2em">审计</span>01(Audit1)
audit-172.18.210.237</div><div class="wm" style="left:1507px;top:734px">audit<span class="cj" style="width:2em">审计</span>01(Audit1)
audit-172.18.210.237</div><div class="wm" style="left:-293px;top:1036px">audit<span class="cj" style="width:2em">审计</span>01(Audit1)
audit-172.18.210.237</div><div class="wm" style="left:7px;top:1036px">audit<span class="cj" style="width:2em">审计</span>01(Audit1)
audit-172.18.210.237</div><div class="wm" style="left:307px;top:1036px">audit<span class="cj" style="width:2em">审计</span>01(Audit1)
audit-172.18.210.237</div><div class="wm" style="left:607px;top:1036px">audit<span class="cj" style="width:2em">审计</span>01(Audit1)
audit-172.18.210.237</div><div class="wm" style="left:907px;top:1036px">audit<span class="cj" style="width:2em">审计</span>01(Audit1)
audit-172.18.210.237</div><div class="wm" style="left:1207px;top:1036px">audit<span class="cj" style="width:2em">审计</span>01(Audit1)
audit-172.18.210.237</div><div class="wm" style="left:1507px;top:1036px">audit<span class="cj" style="width:2em">审计</span>01(Audit1)
audit-172.18.210.237</div></div></body></html>
